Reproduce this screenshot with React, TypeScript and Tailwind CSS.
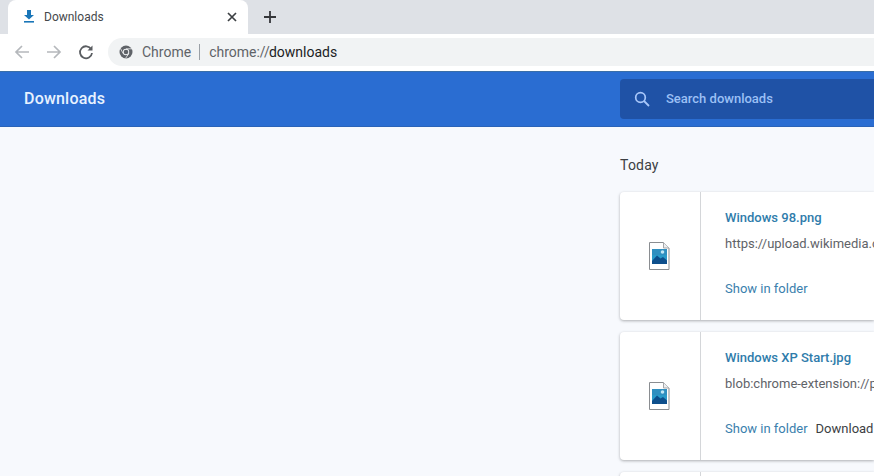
import React from "react";

function FileIcon() {
  return (
    <svg width="22" height="30" viewBox="0 0 22 30" className="block">
      <path d="M1.5 1.5H15.5L21 7V28.5H1.5Z" fill="#fff" stroke="#8a8d91" strokeWidth="1" />
      <path d="M15.5 1.5V7H21" fill="#eceef0" stroke="#a5a8ab" strokeWidth="1" />
      <rect x="4" y="8" width="15" height="15" fill="#2a9ac9" />
      <rect x="4" y="8" width="15" height="6" fill="#2f8fc0" />
      <circle cx="14.5" cy="11" r="1.8" fill="#bfe6f5" />
      <path d="M4 20L9 14.5L12.5 17.5L15 16L19 19.5V23H4Z" fill="#0e4f8c" />
    </svg>
  );
}

function Card({ name, url, extra }: { name: string; url: string; extra?: string }) {
  return (
    <div className="flex h-[128px] w-full shrink-0 rounded-l-[4px] bg-white shadow-[0_1px_3px_rgba(60,64,67,0.4)]">
      <div className="flex w-[81px] shrink-0 items-center justify-center border-r border-[#d4d6d9] pr-[2px]">
        <FileIcon />
      </div>
      <div className="flex min-w-0 flex-1 flex-col overflow-hidden pl-6 text-[13px] leading-5 whitespace-nowrap">
        <div className="mt-[16px] font-medium text-[#2f7cab]">{name}</div>
        <div className="mt-[6px] text-[#5f6368]">{url}</div>
        <div className="mt-[25px] flex gap-2">
          <span className="text-[#3a80ad]">Show in folder</span>
          {extra && <span className="text-[#3c4043]">{extra}</span>}
        </div>
      </div>
    </div>
  );
}

export default function App() {
  return (
    <div className="flex h-[476px] w-[874px] flex-col overflow-hidden bg-[#f7f9fd] font-['Roboto',sans-serif]">
      {/* Tab strip */}
      <div className="flex h-[34px] shrink-0 items-end bg-[#dee1e6] pl-2">
        <div className="flex h-[34px] w-[240px] items-center rounded-t-[8px] bg-white pr-[11px] pl-[14px]">
          <svg width="14" height="14" viewBox="0 0 14 14" className="mt-[-2px]">
            <path d="M5 1H9V6H12L7 10.5L2 6H5Z" fill="#1a76b8" />
            <rect x="2" y="12" width="10" height="1.6" fill="#1a76b8" />
          </svg>
          <span className="ml-[8px] flex-1 text-[12px] text-[#45484c]">Downloads</span>
          <svg width="10" height="10" viewBox="0 0 10 10">
            <path d="M1 1L9 9M9 1L1 9" stroke="#3c4043" strokeWidth="1.7" />
          </svg>
        </div>
        <svg width="12" height="12" viewBox="0 0 12 12" className="mb-[11px] ml-[16px]">
          <path d="M6 0V12M0 6H12" stroke="#35363a" strokeWidth="1.8" />
        </svg>
      </div>

      {/* Toolbar */}
      <div className="flex h-[37px] shrink-0 items-center bg-white pb-px pl-[14px]">
        <svg width="16" height="16" viewBox="0 0 16 16">
          <path d="M15 8H2M8 2L2 8L8 14" fill="none" stroke="#b5b8bc" strokeWidth="1.7" />
        </svg>
        <svg width="16" height="16" viewBox="0 0 16 16" className="ml-[16px]">
          <path d="M1 8H14M8 2L14 8L8 14" fill="none" stroke="#b5b8bc" strokeWidth="1.7" />
        </svg>
        <svg width="16" height="16" viewBox="0 0 16 16" className="ml-[16px]">
          <path d="M13.2 5.2A6 6 0 1 0 14 9" fill="none" stroke="#5a5d61" strokeWidth="1.8" />
          <path d="M14.5 1.5V6.5H9.5Z" fill="#5a5d61" />
        </svg>
        <div className="ml-[14px] flex h-[28px] flex-1 items-center rounded-l-[14px] bg-[#f1f3f4] pl-[11px] text-[14px]">
          <svg width="14" height="14" viewBox="0 0 14 14">
            <circle cx="7" cy="7" r="6.5" fill="#5f6368" />
            <circle cx="7" cy="7" r="3.2" fill="#f1f3f4" />
            <circle cx="7" cy="7" r="2.3" fill="#5f6368" />
            <path d="M7 3.8H13M4.2 8.6L1.5 3.5M9.8 8.6L6.5 13.4" stroke="#f1f3f4" strokeWidth="0.8" />
          </svg>
          <span className="ml-[9px] text-[#5f6368]">Chrome</span>
          <span className="mr-[9px] ml-[8px] h-[16px] w-px bg-[#9aa0a6]" />
          <span className="text-[#5f6368]">chrome://</span>
          <span className="ml-[-1px] text-[#202124]">downloads</span>
        </div>
      </div>

      {/* Header */}
      <div className="flex h-[56px] shrink-0 items-center bg-[#2a6dd2] shadow-[inset_0_1px_0_#3a6ea8,inset_0_-1px_0_#2a63b8]">
        <div className="w-[620px] shrink-0 pl-6 text-[16px] font-medium tracking-[0.2px] text-[#e8f2ff]">Downloads</div>
        <div className="flex h-[40px] flex-1 items-center rounded-l-[4px] bg-[#1f52a6] pl-[13px]">
          <svg width="18" height="18" viewBox="0 0 18 18">
            <circle cx="7.5" cy="7.5" r="4.8" fill="none" stroke="#a8c7fa" strokeWidth="1.7" />
            <path d="M11 11L16 16" stroke="#a8c7fa" strokeWidth="1.8" />
          </svg>
          <span className="ml-[15px] text-[13px] font-medium text-[#9cc0f5]">Search downloads</span>
        </div>
      </div>

      {/* Content */}
      <div className="flex flex-1 flex-col overflow-hidden pl-[620px]">
        <div className="mt-[29px] mb-[18px] h-[18px] text-[14px] leading-[18px] tracking-[0.2px] text-[#3c4043]">Today</div>
        <div className="flex flex-col gap-3">
          <Card name="Windows 98.png" url="https://upload.wikimedia.org/wikipedia/en" />
          <Card name="Windows XP Start.jpg" url="blob:chrome-extension://pkedcjkdefgpdel" extra="Download again" />
          <Card name="Windows 7.png" url="https://upload.wikimedia.org/wikipedia/en" />
        </div>
      </div>
    </div>
  );
}
